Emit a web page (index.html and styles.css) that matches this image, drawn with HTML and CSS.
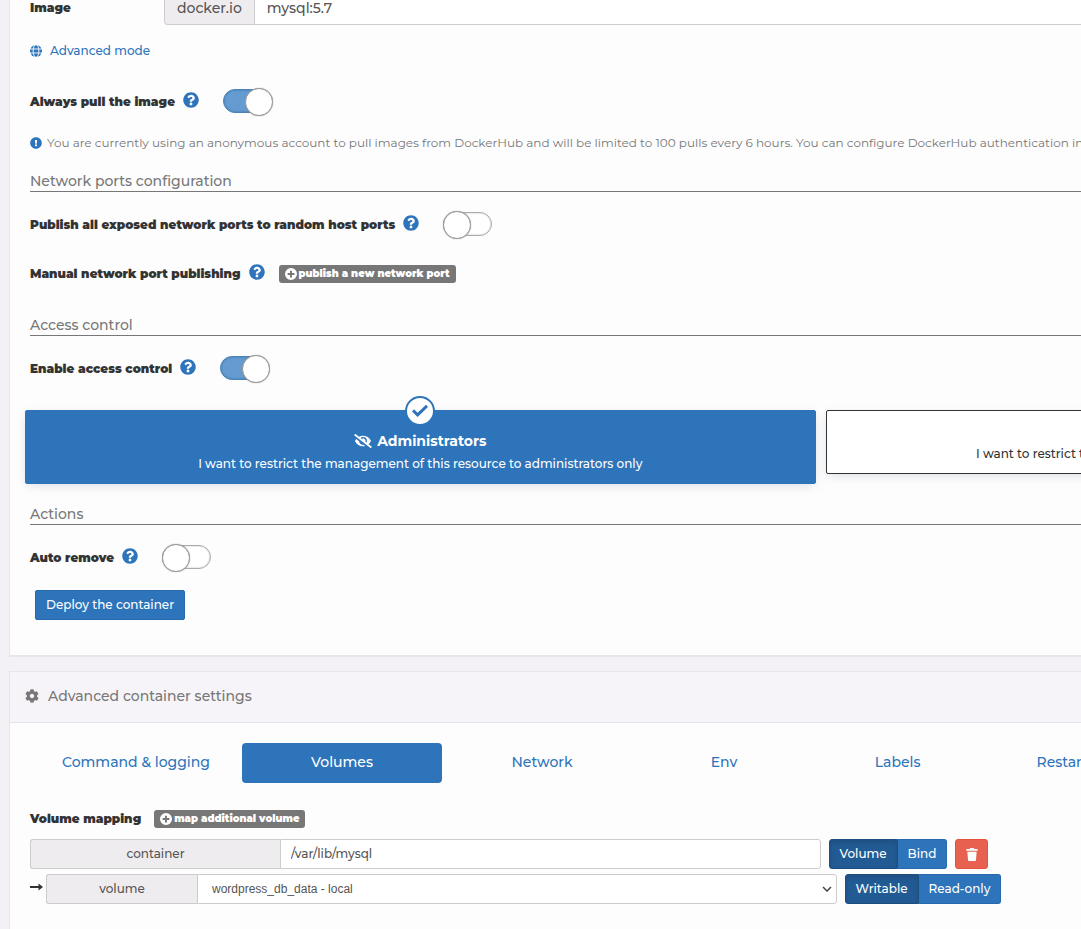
FILE: index.html
```html
<!DOCTYPE html>
<html lang="en">
<head>
<meta charset="utf-8">
<title>Create container</title>
<link rel="stylesheet" href="styles.css">
</head>
<body>
<svg class="sprite" aria-hidden="true">
  <symbol id="question" viewBox="0 0 512 512"><path d="M504 256c0 136.997-111.043 248-248 248S8 392.997 8 256C8 119.083 119.043 8 256 8s248 111.083 248 248zM262.655 90c-54.497 0-89.255 22.957-116.549 63.758-3.536 5.286-2.353 12.415 2.715 16.258l34.699 26.31c5.205 3.947 12.621 3.008 16.665-2.122 17.864-22.658 30.113-35.797 57.303-35.797 20.429 0 45.698 13.148 45.698 32.958 0 14.976-12.363 22.667-32.534 33.976C247.128 238.528 216 254.941 216 296v4c0 6.627 5.373 12 12 12h56c6.627 0 12-5.373 12-12v-1.333c0-28.462 83.186-29.647 83.186-106.667 0-58.002-60.165-102-116.531-102zM256 338c-25.365 0-46 20.635-46 46 0 25.364 20.635 46 46 46s46-20.636 46-46c0-25.365-20.635-46-46-46z"/></symbol>
  <symbol id="exclamation" viewBox="0 0 512 512"><path d="M504 256c0 136.997-111.043 248-248 248S8 392.997 8 256C8 119.083 119.043 8 256 8s248 111.083 248 248zm-248 50c-25.405 0-46 20.595-46 46s20.595 46 46 46 46-20.595 46-46-20.595-46-46-46zm-43.673-165.346l7.418 136c.347 6.364 5.609 11.346 11.982 11.346h48.546c6.373 0 11.635-4.982 11.982-11.346l7.418-136c.375-6.874-5.098-12.654-11.982-12.654h-63.383c-6.884 0-12.356 5.780-11.981 12.654z"/></symbol>
  <symbol id="plus" viewBox="0 0 16 16"><path fill-rule="evenodd" d="M8 0a8 8 0 1 1 0 16A8 8 0 0 1 8 0zM6.700 3.500v3.200H3.500v2.600h3.200v3.200h2.600V9.300h3.200V6.700H9.300V3.500z"/></symbol>
  <symbol id="globe" viewBox="0 0 16 16"><circle cx="8" cy="8" r="8"/><g fill="none" stroke="#fff" stroke-width="1.200"><ellipse cx="8" cy="8" rx="3.800" ry="8.500"/><path d="M0 5.300h16M0 10.700h16"/></g></symbol>
  <symbol id="hidden" viewBox="0 0 640 512"><path d="M320 400c-75.850 0-137.250-58.710-142.900-133.110L72.200 185.820c-13.790 17.300-26.480 35.590-36.720 55.590a32.350 32.350 0 0 0 0 29.190C89.710 376.410 197.070 448 320 448c26.910 0 52.870-4 77.890-10.460L346 397.390a144.130 144.130 0 0 1-26 2.610zm313.820 58.100l-110.550-85.440a331.250 331.250 0 0 0 81.250-102.070 32.350 32.350 0 0 0 0-29.190C550.290 135.590 442.930 64 320 64a308.150 308.150 0 0 0-147.320 37.700L45.460 3.370A16 16 0 0 0 23 6.180L3.370 31.450A16 16 0 0 0 6.180 53.900l588.360 454.730a16 16 0 0 0 22.460-2.810l19.640-25.270a16 16 0 0 0-2.820-22.450zm-183.720-142l-39.300-30.380A94.750 94.750 0 0 0 416 256a94.760 94.760 0 0 0-121.310-92.210A47.650 47.650 0 0 1 304 192a46.640 46.640 0 0 1-1.540 10l-73.610-56.890A142.310 142.310 0 0 1 320 112a143.920 143.920 0 0 1 144 144c0 21.630-5.290 41.790-13.900 60.110z"/></symbol>
  <symbol id="cog" viewBox="0 0 512 512"><path d="M487.400 315.700l-42.600-24.600c4.300-23.200 4.300-47 0-70.200l42.600-24.600c4.900-2.800 7.100-8.600 5.500-14-11.100-35.600-30-67.800-54.700-94.600-3.800-4.100-10-5.100-14.800-2.300L380.800 110c-17.900-15.400-38.500-27.300-60.800-35.100V25.800c0-5.600-3.900-10.500-9.400-11.700-36.700-8.200-74.300-7.800-109.200 0-5.500 1.200-9.400 6.100-9.400 11.700V75c-22.200 7.900-42.800 19.800-60.800 35.100L88.700 85.500c-4.900-2.800-11-1.900-14.800 2.300-24.700 26.700-43.600 58.900-54.700 94.600-1.700 5.400.6 11.200 5.500 14L67.300 221c-4.300 23.200-4.300 47 0 70.200l-42.600 24.600c-4.900 2.800-7.100 8.600-5.500 14 11.100 35.600 30 67.800 54.700 94.600 3.800 4.100 10 5.100 14.800 2.300l42.600-24.600c17.900 15.400 38.500 27.300 60.800 35.100v49.200c0 5.600 3.900 10.500 9.400 11.700 36.700 8.200 74.300 7.800 109.200 0 5.500-1.200 9.400-6.100 9.400-11.700v-49.200c22.200-7.900 42.800-19.800 60.800-35.100l42.600 24.600c4.900 2.800 11 1.900 14.800-2.300 24.700-26.700 43.600-58.900 54.700-94.600 1.500-5.500-.7-11.300-5.600-14.100zM256 336c-44.100 0-80-35.900-80-80s35.900-80 80-80 80 35.900 80 80-35.900 80-80 80z"/></symbol>
  <symbol id="check" viewBox="0 0 16 16"><path d="M0 8.500 2 6.300 5.600 9.800 14 1.800 16 4 5.600 14z"/></symbol>
  <symbol id="trash" viewBox="0 0 12 14"><path d="M4 0h4l.6 1H12v2H0V1h3.400zM1 4h10l-.7 9q-.1 1-1 1H2.700q-.9 0-1-1z"/></symbol>
  <symbol id="arrow" viewBox="0 0 13 8"><path d="M0 3h8.500V.5L13 4 8.500 7.500V5H0z"/></symbol>
</svg>

<main class="page">
  <section class="card">
    <form class="form">
      <div class="image-row">
        <label for="image">Image</label>
        <span class="addon addon-registry">docker.io</span>
        <input id="image" type="text" value="mysql:5.7">
      </div>
      <a class="mode" href="#"><svg class="icon-small"><use href="#globe"/></svg>Advanced mode</a>
      <div class="row row-pull">
        <label for="pull">Always pull the image</label>
        <svg class="icon-help"><use href="#question"/></svg>
        <input class="toggle" id="pull" type="checkbox" checked>
      </div>
      <p class="notice"><svg class="icon-small"><use href="#exclamation"/></svg>You are currently using an anonymous account to pull images from DockerHub and will be limited to 100 pulls every 6 hours. You can configure DockerHub authentication in</p>

      <h2 class="heading">Network ports configuration</h2>
      <div class="row">
        <label for="publish">Publish all exposed network ports to random host ports</label>
        <svg class="icon-help"><use href="#question"/></svg>
        <input class="toggle" id="publish" type="checkbox">
      </div>
      <div class="row row-ports">
        <span class="row-label">Manual network port publishing</span>
        <svg class="icon-help"><use href="#question"/></svg>
        <button class="tag" type="button"><svg><use href="#plus"/></svg>publish a new network port</button>
      </div>

      <h2 class="heading heading-spaced">Access control</h2>
      <div class="row">
        <label for="access">Enable access control</label>
        <svg class="icon-help"><use href="#question"/></svg>
        <input class="toggle" id="access" type="checkbox" checked>
      </div>
      <div class="choices">
        <button class="choice choice-active" type="button">
          <span class="choice-check"><svg><use href="#check"/></svg></span>
          <span class="choice-title"><svg><use href="#hidden"/></svg>Administrators</span>
          <span>I want to restrict the management of this resource to administrators only</span>
        </button>
        <button class="choice" type="button">
          <span class="choice-title">Restricted</span>
          <span>I want to restrict the management of this resource to a set of users and/or teams</span>
        </button>
      </div>

      <h2 class="heading">Actions</h2>
      <div class="row">
        <label for="remove">Auto remove</label>
        <svg class="icon-help"><use href="#question"/></svg>
        <input class="toggle" id="remove" type="checkbox">
      </div>
      <button class="button deploy" type="button">Deploy the container</button>
    </form>
  </section>

  <section class="card">
    <h2 class="card-header"><svg><use href="#cog"/></svg>Advanced container settings</h2>
    <div class="card-body">
      <nav class="tabs">
        <a href="#">Command &amp; logging</a>
        <a class="tab-active" href="#">Volumes</a>
        <a href="#">Network</a>
        <a href="#">Env</a>
        <a href="#">Labels</a>
        <a href="#">Restart policy</a>
      </nav>
      <div class="mapping-head">
        <span class="row-label">Volume mapping</span>
        <button class="tag" type="button"><svg><use href="#plus"/></svg>map additional volume</button>
      </div>
      <div class="mapping">
        <div class="group group-container">
          <label class="addon" for="path">container</label>
          <input id="path" type="text" value="/var/lib/mysql">
        </div>
        <div class="segments">
          <button class="button button-on" type="button">Volume</button>
          <button class="button" type="button">Bind</button>
        </div>
        <button class="button button-danger" type="button" aria-label="Remove volume"><svg><use href="#trash"/></svg></button>
      </div>
      <div class="mapping">
        <svg class="icon-arrow"><use href="#arrow"/></svg>
        <div class="group group-volume">
          <label class="addon" for="volume">volume</label>
          <div class="select-wrap">
            <select id="volume"><option>wordpress_db_data - local</option></select>
            <svg class="chevron" viewBox="0 0 10 6"><path d="M1 1l4 4 4-4"/></svg>
          </div>
        </div>
        <div class="segments">
          <button class="button button-on" type="button">Writable</button>
          <button class="button" type="button">Read-only</button>
        </div>
      </div>
    </div>
  </section>
</main>
</body>
</html>
```
FILE: styles.css
```css
* { box-sizing: border-box; }

body {
  margin: 0;
  overflow: hidden;
  background: #f3f1f5;
  color: #333;
  font: 500 12px/20px Montserrat, Inter, sans-serif;
}

button, input, select { font: inherit; color: inherit; margin: 0; }
button { cursor: pointer; }
svg { fill: currentColor; flex: none; }
a { color: #2d74bb; text-decoration: none; }
.sprite { display: none; }

/* The form is wider than the viewport and runs off its right edge. */
.page { width: 152%; padding: 0 11px 0 9px; }

.card {
  margin-bottom: 14px;
  background: #fdfdfe;
  border: 1px solid #e8e5ea;
  border-bottom-width: 2px;
}
.card:first-child { border-top: 0; }
.form { padding: 0 20px 35px; }

label, .row-label { font-weight: 900; }
.mode { display: flex; align-items: center; gap: 8px; height: 20px; margin-top: 16px; width: max-content; }
.icon-small { width: 12px; height: 12px; }
.notice { display: flex; align-items: center; gap: 5px; margin: 16px 0 0; color: #777; font-weight: 400; white-space: nowrap; }
.mode .icon-small, .notice .icon-small { color: #2d74bb; }

.heading {
  height: 20px;
  margin: 19px 0 0;
  border-bottom: 1px solid #777;
  color: #777;
  font-size: 14px;
  font-weight: 500;
  line-height: 18px;
}
.heading-spaced { margin-top: 27px; }

.row { display: flex; align-items: center; height: 30px; margin-top: 18px; }
.row label { padding-bottom: 1px; }
.row-pull { margin-top: 26px; }
.row-ports { margin-top: 19px; }
.icon-help { width: 16px; height: 16px; margin: 0 0 4px 8px; color: #2d74bb; }
.row .tag { margin-left: 14px; }

.toggle {
  appearance: none;
  position: relative;
  width: 49px;
  height: 24px;
  margin: 0 0 2px 24px;
  border: 1px solid #aaa;
  border-radius: 12px;
  background: #fff;
  box-shadow: inset 0 0 2px #bbb;
}
.toggle::before {
  content: "";
  position: absolute;
  top: -2px;
  left: -1px;
  width: 26px;
  height: 26px;
  border: 1px solid #999;
  border-radius: 50%;
  background: #fff;
  box-shadow: 0 0 1px #888;
}
.toggle:checked { background: #649bd0; border-color: #4c82b7; box-shadow: inset 0 0 2px #346da5; }
.toggle:checked::before { left: auto; right: -2px; }

.tag {
  display: flex;
  align-items: center;
  gap: 2px;
  height: 18px;
  padding: 0 6px;
  border: 0;
  border-radius: 3px;
  background: #777;
  color: #fff;
  font-size: 10px;
  font-weight: 900;
  white-space: nowrap;
}
.tag svg { width: 12px; height: 12px; }

.choices {
  display: grid;
  grid-template-columns: 1fr 1fr;
  align-items: start;
  gap: 10px;
  margin: 26px -5px 0;
}
.choice {
  position: relative;
  display: flex;
  flex-direction: column;
  align-items: center;
  gap: 3px;
  height: 64px;
  padding: 9px 10px;
  border: 1px solid #333;
  border-radius: 2px;
  background: #fff;
  box-shadow: 0 3px 10px -2px #a1aab166;
}
.choice-active { height: 74px; padding-top: 19px; border-color: #2d74bb; background: #2d74bb; color: #fff; }
.choice-title { display: flex; align-items: center; gap: 5px; height: 22px; font-size: 14px; font-weight: 700; }
.choice-title svg { width: 18px; height: 14px; }
.choice-check {
  position: absolute;
  top: -15px;
  left: 50%;
  display: grid;
  place-items: center;
  width: 30px;
  height: 30px;
  margin-left: -15px;
  border: 2px solid #2d74bb;
  border-radius: 50%;
  background: #fff;
  color: #2d74bb;
}
.choice-check svg { width: 16px; height: 16px; }
.choices + .heading { margin-top: 21px; }

.button {
  height: 30px;
  padding: 0 10px;
  border: 1px solid #2669ad;
  border-radius: 3px;
  background: #2d74bb;
  color: #fff;
  white-space: nowrap;
}
.deploy { display: block; margin: 17px 0 0 5px; border-radius: 2px; }
.button-on { background: #225b94; border-color: #1d4e80; box-shadow: inset 0 3px 5px #00000020; }
.button-danger { width: 33px; padding: 0; border-color: #e5513f; background: #e86050; }
.button-danger svg { display: block; width: 12px; height: 13px; margin: auto; }

.card-header {
  display: flex;
  align-items: center;
  gap: 9px;
  height: 51px;
  margin: 0;
  padding: 0 15px 2px;
  border-bottom: 1px solid #e8e5ea;
  background: #f6f4f8;
  color: #777;
  font-size: 14px;
  font-weight: 500;
}
.card-header svg { width: 14px; height: 14px; }
.card-body { padding: 20px 20px 40px; }

.tabs { display: grid; grid-template-columns: 212fr 200fr 200fr 164fr 183fr 192fr 430fr; }
.tabs a { height: 40px; border-radius: 4px; font-size: 14px; line-height: 38px; text-align: center; }
.tabs .tab-active { background: #2d74bb; color: #fff; }

.mapping-head { display: flex; align-items: center; gap: 13px; height: 20px; margin: 26px 0 10px; }
.mapping { display: flex; margin-bottom: 5px; }
.group { display: flex; width: 50%; margin-right: 8px; }
.group input { flex: 1; }
.addon {
  display: block;
  padding: 0 12px;
  border: 1px solid #ccc;
  border-right: 0;
  border-radius: 3px 0 0 3px;
  background: #efecf0;
  color: #555;
  font-weight: 500;
  line-height: 28px;
  text-align: center;
}
.group-container .addon { width: 250px; }
.group-volume .addon { width: 151px; }
input[type="text"], select {
  min-width: 0;
  height: 30px;
  padding: 0 10px 1px;
  border: 1px solid #ccc;
  border-radius: 0 3px 3px 0;
  background: #fff;
  color: #555;
}
.select-wrap { position: relative; flex: 1; }
select { appearance: none; width: 100%; padding: 0 14px; font-family: "Liberation Sans", sans-serif; font-weight: 400; }
.chevron { position: absolute; top: 12px; right: 5px; width: 10px; height: 6px; fill: none; stroke: #444; stroke-width: 1.5; }
.icon-arrow { width: 13px; height: 8px; margin: 9px 3px 0 0; }
.segments { display: flex; margin-right: 8px; }
.segments .button:first-child { border-radius: 3px 0 0 3px; }
.segments .button:last-child { border-left: 0; border-radius: 0 3px 3px 0; }

/* Only the lower part of the first field is in view. */
.image-row { display: flex; height: 25px; }
.image-row label { width: 134px; line-height: 16px; }
.image-row .addon, .image-row input[type="text"] {
  height: 25px;
  padding: 0 12px 8px;
  border-top: 0;
  font-size: 14px;
  line-height: 16px;
}
.image-row .addon { border-radius: 0 0 0 4px; }
.image-row input[type="text"] { flex: 1; }
```
